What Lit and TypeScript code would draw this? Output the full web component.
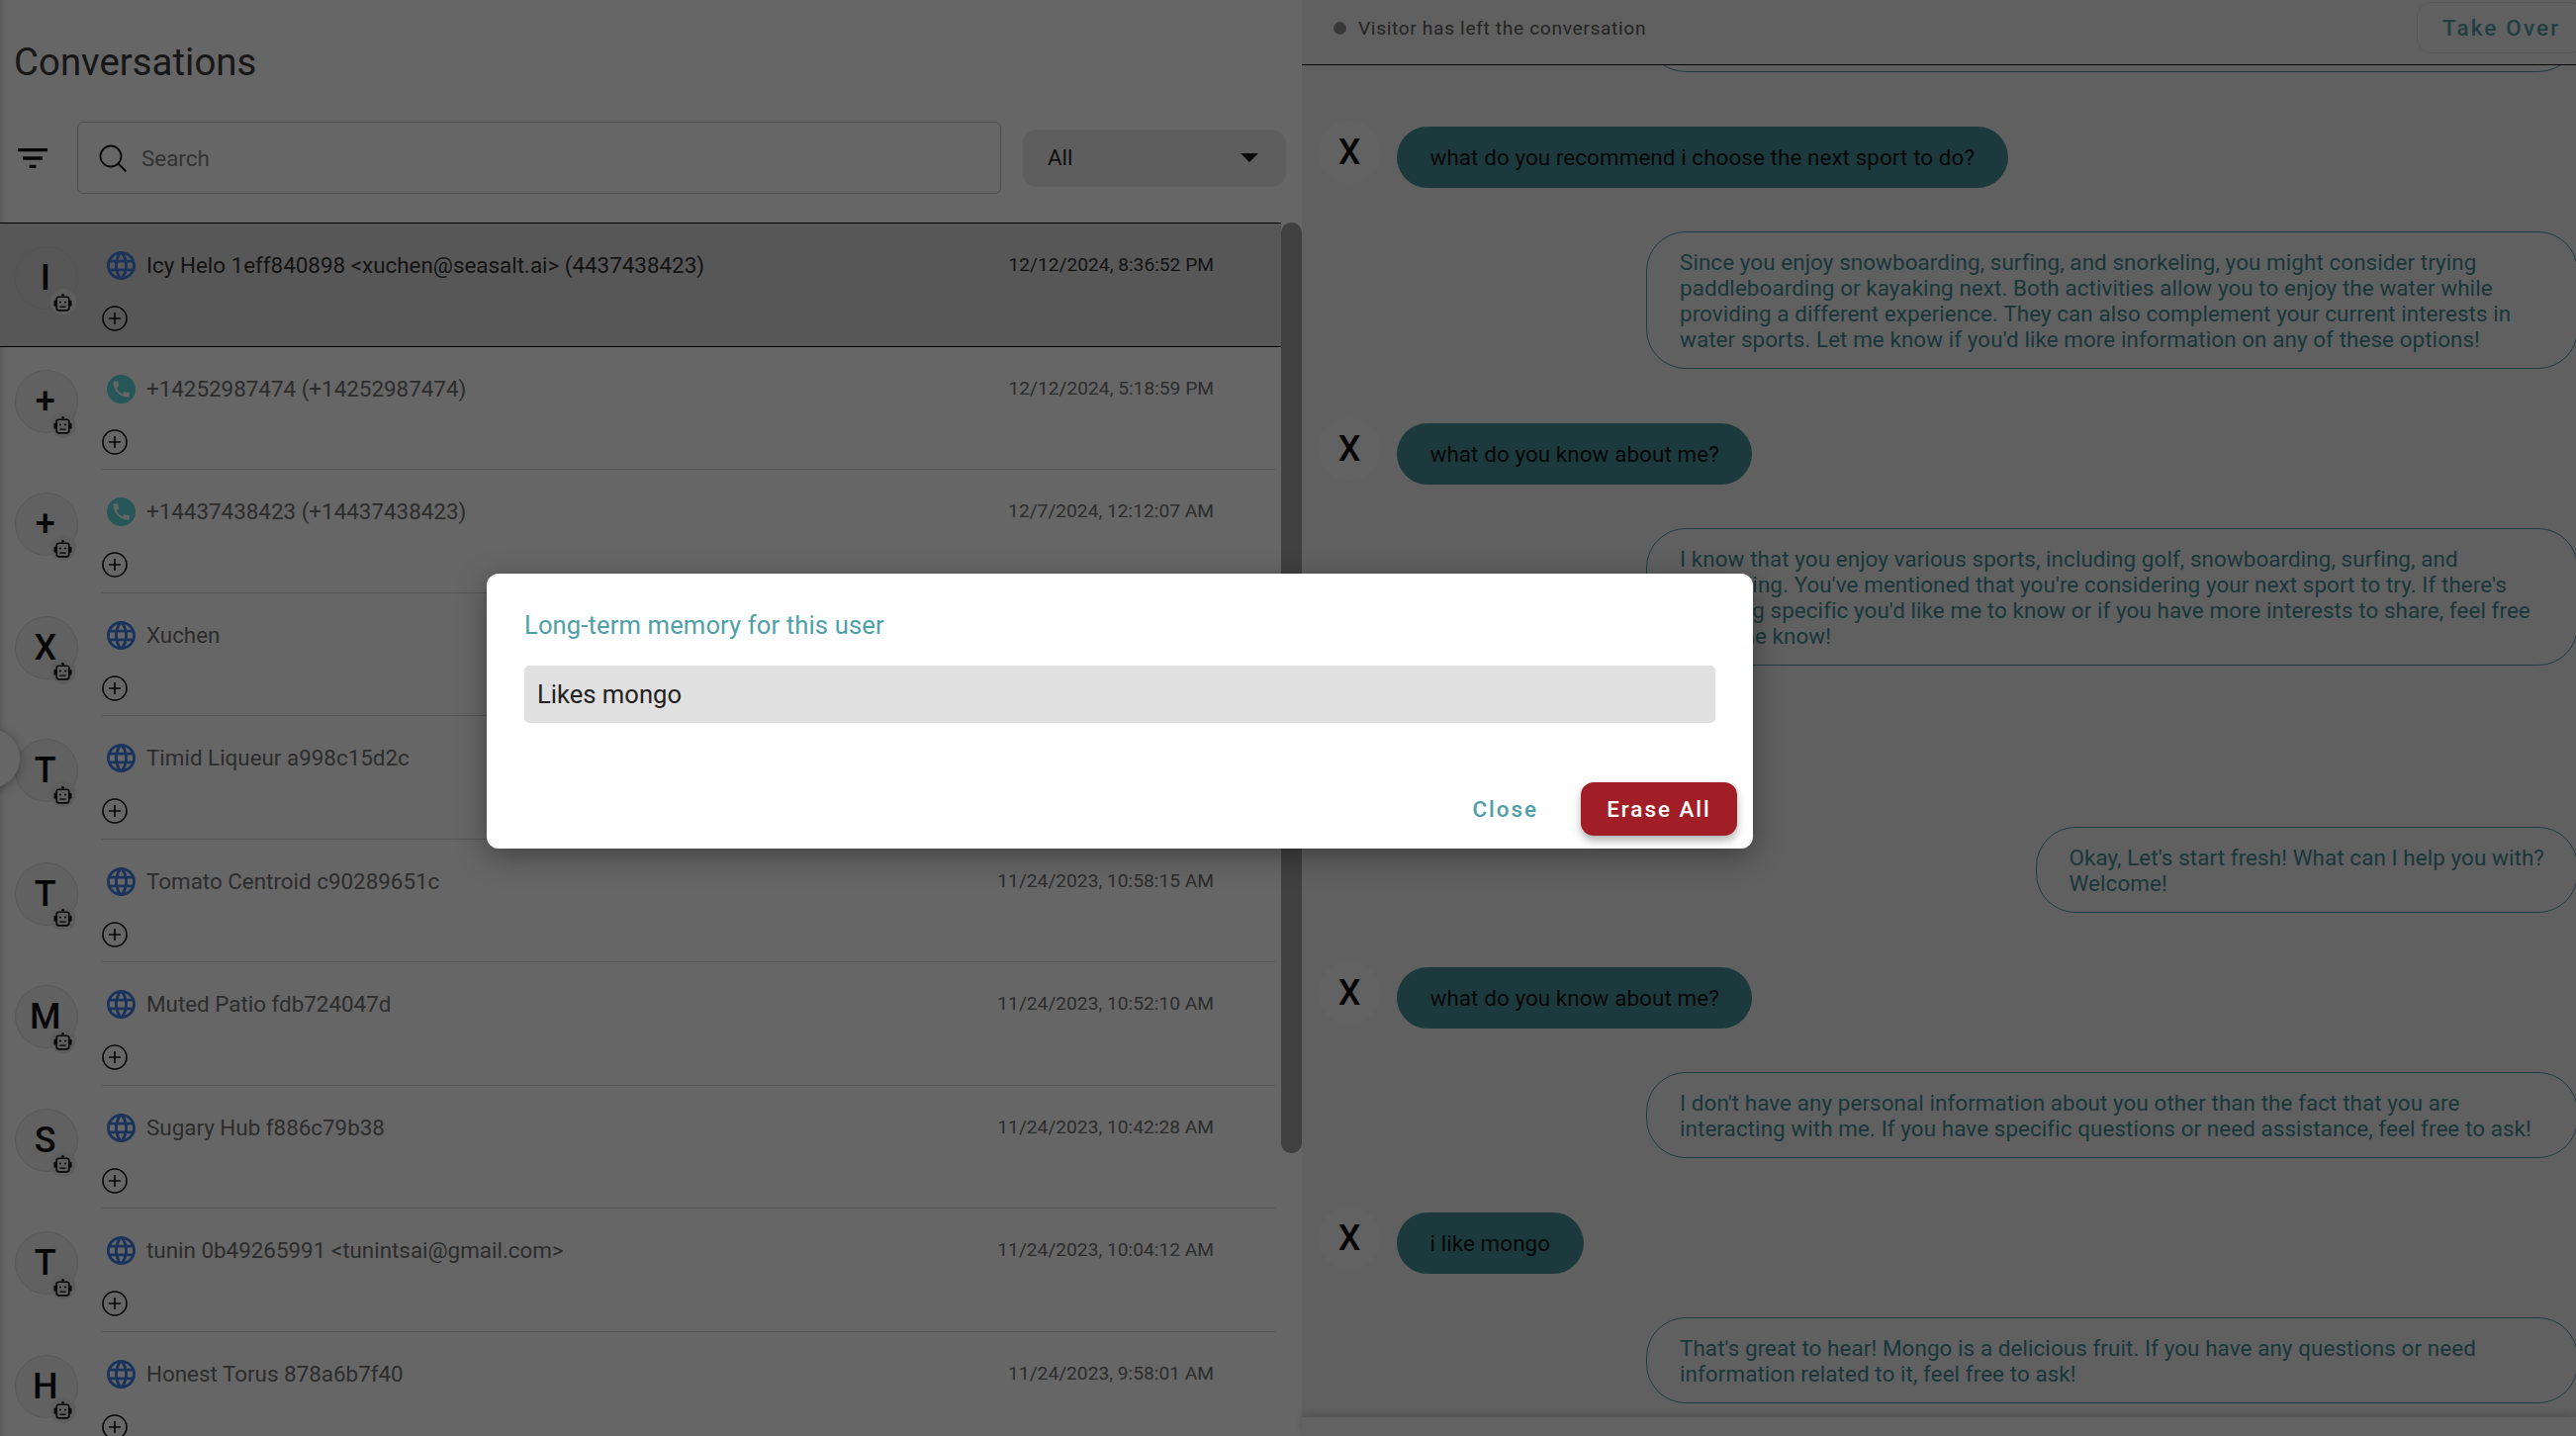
import { LitElement, html, css, svg } from 'lit';
import { customElement } from 'lit/decorators.js';
import { classMap } from 'lit/directives/class-map.js';

type Channel = 'web' | 'phone';

interface Conversation {
  letter: string;
  name: string;
  channel: Channel;
  date: string;
  selected?: boolean;
}

type Message =
  | { from: 'user' | 'bot'; text: string }
  | { from: 'hidden' };

const conversations: Conversation[] = [
  { letter: 'I', name: 'Icy Helo 1eff840898 <xuchen@seasalt.ai> (4437438423)', channel: 'web', date: '12/12/2024, 8:36:52 PM', selected: true },
  { letter: '+', name: '+14252987474 (+14252987474)', channel: 'phone', date: '12/12/2024, 5:18:59 PM' },
  { letter: '+', name: '+14437438423 (+14437438423)', channel: 'phone', date: '12/7/2024, 12:12:07 AM' },
  { letter: 'X', name: 'Xuchen', channel: 'web', date: '' },
  { letter: 'T', name: 'Timid Liqueur a998c15d2c', channel: 'web', date: '' },
  { letter: 'T', name: 'Tomato Centroid c90289651c', channel: 'web', date: '11/24/2023, 10:58:15 AM' },
  { letter: 'M', name: 'Muted Patio fdb724047d', channel: 'web', date: '11/24/2023, 10:52:10 AM' },
  { letter: 'S', name: 'Sugary Hub f886c79b38', channel: 'web', date: '11/24/2023, 10:42:28 AM' },
  { letter: 'T', name: 'tunin 0b49265991 <tunintsai@gmail.com>', channel: 'web', date: '11/24/2023, 10:04:12 AM' },
  { letter: 'H', name: 'Honest Torus 878a6b7f40', channel: 'web', date: '11/24/2023, 9:58:01 AM' },
];

const messages: Message[] = [
  { from: 'user', text: 'what do you recommend i choose the next sport to do?' },
  { from: 'bot', text: "Since you enjoy snowboarding, surfing, and snorkeling, you might consider trying paddleboarding or kayaking next. Both activities allow you to enjoy the water while providing a different experience. They can also complement your current interests in water sports. Let me know if you'd like more information on any of these options!" },
  { from: 'user', text: 'what do you know about me?' },
  { from: 'bot', text: "I know that you enjoy various sports, including golf, snowboarding, surfing, and snorkeling. You've mentioned that you're considering your next sport to try. If there's anything specific you'd like me to know or if you have more interests to share, feel free to let me know!" },
  { from: 'hidden' },
  { from: 'bot', text: "Okay, Let's start fresh! What can I help you with?\nWelcome!" },
  { from: 'user', text: 'what do you know about me?' },
  { from: 'bot', text: "I don't have any personal information about you other than the fact that you are interacting with me. If you have specific questions or need assistance, feel free to ask!" },
  { from: 'user', text: 'i like mongo' },
  { from: 'bot', text: "That's great to hear! Mongo is a delicious fruit. If you have any questions or need information related to it, feel free to ask!" },
];

const globeIcon = svg`<path fill="#3f80e8" d="M11.99 2C6.47 2 2 6.48 2 12s4.47 10 9.99 10C17.52 22 22 17.52 22 12S17.52 2 11.99 2zm6.93 6h-2.95c-.32-1.25-.78-2.45-1.38-3.56 1.84.63 3.37 1.91 4.33 3.56zM12 4.04c.83 1.2 1.48 2.53 1.91 3.96h-3.82c.43-1.43 1.08-2.76 1.91-3.96zM4.26 14C4.1 13.36 4 12.69 4 12s.1-1.36.26-2h3.38c-.08.66-.14 1.32-.14 2 0 .68.06 1.34.14 2H4.26zm.82 2h2.95c.32 1.25.78 2.45 1.38 3.56-1.84-.63-3.37-1.9-4.33-3.56zm2.95-8H5.08c.96-1.66 2.49-2.93 4.33-3.56C8.81 5.55 8.35 6.75 8.03 8zM12 19.96c-.83-1.2-1.48-2.53-1.91-3.96h3.82c-.43 1.43-1.08 2.76-1.91 3.96zM14.34 14H9.66c-.09-.66-.16-1.32-.16-2 0-.68.07-1.35.16-2h4.68c.09.65.16 1.32.16 2 0 .68-.07 1.34-.16 2zm.25 5.56c.6-1.11 1.06-2.31 1.38-3.56h2.95c-.96 1.65-2.49 2.93-4.33 3.56zM16.36 14c.08-.66.14-1.32.14-2 0-.68-.06-1.34-.14-2h3.38c.16.64.26 1.31.26 2s-.1 1.36-.26 2h-3.38z"/>`;

const phoneIcon = svg`<circle cx="12" cy="12" r="10" fill="#62d8dc"/><path transform="translate(4.6 4.6) scale(.62)" fill="#fff" d="M6.62 10.79c1.44 2.83 3.76 5.14 6.59 6.59l2.2-2.2c.27-.27.67-.36 1.02-.24 1.12.37 2.33.57 3.57.57.55 0 1 .45 1 1V20c0 .55-.45 1-1 1-9.39 0-17-7.61-17-17 0-.55.45-1 1-1h3.5c.55 0 1 .45 1 1 0 1.25.2 2.45.57 3.57.11.35.03.74-.25 1.02l-2.2 2.2z"/>`;

@customElement('app-root')
export class AppRoot extends LitElement {
  static styles = css`
    :host {
      display: block;
      position: relative;
      height: 100vh;
      overflow: hidden;
      font-family: Roboto, sans-serif;
      background: #fff;
    }
    .page {
      display: grid;
      grid-template-columns: 1316px 1fr;
      height: 100%;
      isolation: isolate;
    }
    .left {
      display: flex;
      flex-direction: column;
      min-width: 0;
      overflow: hidden;
      box-shadow: inset 8px 0 8px -8px rgba(0, 0, 0, 0.2);
    }
    h1 {
      margin: 0;
      padding: 42px 0 0 14px;
      height: 81px;
      box-sizing: border-box;
      font-size: 38.4px;
      line-height: 42px;
      font-weight: 400;
      color: #3a3a3a;
    }
    .tools {
      display: flex;
      align-items: center;
      height: 144px;
      box-sizing: border-box;
      padding: 13px 16px 0 18px;
    }
    .filter {
      width: 30px;
      height: 20px;
      margin-right: 30px;
      flex: none;
    }
    .search {
      flex: 1;
      height: 73px;
      display: flex;
      align-items: center;
      gap: 14px;
      box-sizing: border-box;
      padding-left: 21px;
      border: 1.5px solid #bdbdbd;
      border-radius: 6px;
      font-size: 22.4px;
      color: #808080;
    }
    .search svg {
      width: 29px;
      height: 28px;
    }
    .select {
      width: 266px;
      height: 58px;
      margin-left: 22px;
      display: flex;
      align-items: center;
      justify-content: space-between;
      box-sizing: border-box;
      padding: 0 28px 1px 25px;
      background: #ececec;
      border-radius: 14px;
      font-size: 22.4px;
      color: #2a2a2a;
    }
    .caret {
      width: 0;
      height: 0;
      border-left: 9px solid transparent;
      border-right: 9px solid transparent;
      border-top: 9px solid #111;
    }
    .list {
      flex: 1;
      display: flex;
      min-height: 0;
      overflow: hidden;
    }
    .rows {
      flex: 1;
      min-width: 0;
      border-top: 1px solid #000;
    }
    .row {
      display: flex;
      height: 124.5px;
      box-sizing: border-box;
      padding-left: 14.5px;
    }
    .row.selected {
      background: #dadada;
      border-bottom: 1px solid #000;
    }
    .avatar {
      position: relative;
      flex: none;
      width: 64px;
      height: 64px;
      margin-top: 23px;
      padding-right: 1.5px;
      border-radius: 50%;
      box-sizing: border-box;
      border: 1px solid #dcdcdc;
      background: #f2f2f2;
      display: flex;
      align-items: center;
      justify-content: center;
      font-size: 36px;
      font-weight: 500;
      color: #111;
    }
    .selected .avatar {
      background: #dadada;
      border-color: #cfcfcf;
    }
    .badge {
      position: absolute;
      right: 1px;
      bottom: -6px;
      width: 26px;
      height: 26px;
      border-radius: 50%;
      background: #ececec;
      display: flex;
      align-items: center;
      justify-content: center;
    }
    .badge svg {
      width: 21px;
      height: 21px;
    }
    .body {
      flex: 1;
      min-width: 0;
      margin: 0 6px 0 24.5px;
      padding: 28px 62px 0 0;
      border-bottom: 1px solid #d0d0d0;
    }
    .selected .body {
      border-bottom: none;
    }
    .line {
      display: flex;
      align-items: center;
      height: 29px;
      padding-left: 5px;
    }
    .line svg {
      flex: none;
      width: 29px;
      height: 29px;
    }
    .name {
      flex: 1;
      margin: -1px 0 0 11px;
      font-size: 22.4px;
      color: #707070;
      white-space: nowrap;
    }
    .selected .name,
    .selected .date {
      color: #333;
    }
    .date {
      margin-top: -2px;
      font-size: 19.2px;
      color: #707070;
      white-space: nowrap;
    }
    .add {
      display: block;
      width: 26px;
      height: 26px;
      margin-top: 26px;
    }
    .track {
      flex: none;
      width: 21px;
    }
    .thumb {
      height: 941px;
      border-radius: 10px;
      background: #a0a0a0;
    }
    .handle {
      position: absolute;
      left: -40px;
      top: 737px;
      width: 60px;
      height: 60px;
      border-radius: 50%;
      background: #fff;
      box-shadow: 0 2px 12px rgba(0, 0, 0, 0.35);
    }
    .chat {
      display: flex;
      flex-direction: column;
      min-width: 0;
      background: #f0f0f0;
    }
    .status {
      position: relative;
      z-index: 1;
      flex: none;
      height: 66px;
      box-sizing: border-box;
      display: flex;
      align-items: flex-start;
      overflow: hidden;
      padding: 2px 0 0 32px;
      background: #f0f0f0;
      border-bottom: 1px solid #111;
      font-size: 19.2px;
      letter-spacing: 0.64px;
      color: #5a5a5a;
    }
    .status-text {
      display: flex;
      align-items: center;
      gap: 12px;
      height: 52px;
      flex: 1;
    }
    .dot {
      width: 13px;
      height: 13px;
      border-radius: 50%;
      background: #909090;
    }
    .take {
      flex: none;
      width: 170px;
      height: 52px;
      margin-right: -9px;
      box-sizing: border-box;
      padding-left: 25px;
      display: flex;
      align-items: center;
      border: 1px solid #dcdcdc;
      border-radius: 14px;
      font-size: 22.4px;
      font-weight: 500;
      letter-spacing: 2.2px;
      color: #4f9fa9;
    }
    .feed {
      flex: 1;
      min-height: 0;
      overflow: hidden;
    }
    .msg {
      display: flex;
    }
    .msg.user {
      align-items: flex-start;
      gap: 16px;
      padding-left: 16px;
      margin-top: 55px;
    }
    .msg.bot {
      justify-content: flex-end;
      margin-top: 44px;
      margin-right: -2px;
    }
    .msg.spacer {
      height: 64px;
      margin-top: 55px;
    }
    .partial {
      height: 40px;
      margin: -33px -2px 0 auto;
      width: 942px;
      box-sizing: border-box;
      border: 1px solid #4a96a0;
      border-radius: 0 0 40px 40px;
    }
    .face {
      flex: none;
      width: 64px;
      height: 64px;
      margin-top: -6px;
      border-radius: 50%;
      background: #f4f4f4;
      display: flex;
      align-items: center;
      justify-content: center;
      font-size: 36px;
      font-weight: 500;
      color: #111;
    }
    .bubble {
      box-sizing: border-box;
      font-size: 22.4px;
      line-height: 26px;
      letter-spacing: 0.09px;
      white-space: pre-line;
    }
    .user .bubble {
      height: 62px;
      padding: 18px 33.5px;
      border-radius: 31px;
      background: #47919a;
      color: #111;
    }
    .bot .bubble {
      max-width: 942px;
      padding: 16.5px 33px;
      border: 1px solid #4a96a0;
      border-radius: 40px;
      color: #3f8a93;
    }
    .foot {
      flex: none;
      height: 19px;
      background: #f6f6f6;
      box-shadow: 0 -3px 8px rgba(0, 0, 0, 0.18);
    }
    .scrim {
      position: absolute;
      inset: 0;
      background: rgba(0, 0, 0, 0.6);
    }
    .dialog {
      position: absolute;
      left: 492px;
      top: 580px;
      width: 1280px;
      height: 278px;
      box-sizing: border-box;
      padding: 37px 16px 0 38px;
      display: flex;
      flex-direction: column;
      background: #fff;
      border-radius: 12px;
      box-shadow: 0 8px 30px rgba(0, 0, 0, 0.35);
    }
    .dialog h2 {
      margin: 0;
      font-size: 25.6px;
      line-height: 30px;
      font-weight: 400;
      letter-spacing: 0.12px;
      color: #4fa0a8;
    }
    .memory {
      width: 1204px;
      height: 58px;
      margin-top: 26px;
      box-sizing: border-box;
      padding-left: 13px;
      display: flex;
      align-items: center;
      background: #e0e0e0;
      border-radius: 5px;
      font-size: 25.6px;
      color: #222;
    }
    .actions {
      display: flex;
      justify-content: flex-end;
      align-items: center;
      gap: 43px;
      margin-top: 60px;
    }
    .close {
      font-size: 22.4px;
      font-weight: 500;
      letter-spacing: 2px;
      color: #4fa0a8;
    }
    .erase {
      width: 158px;
      height: 54px;
      display: flex;
      align-items: center;
      justify-content: center;
      background: #a11e26;
      border-radius: 13px;
      font-size: 22.4px;
      font-weight: 500;
      letter-spacing: 2px;
      color: #fff;
      box-shadow: 0 5px 9px rgba(0, 0, 0, 0.3);
    }
  `;

  private _robot() {
    return html`<svg viewBox="0 0 20 20" fill="none" stroke="#111" stroke-width="1.6">
      <rect x="4" y="5" width="12" height="13" rx="2.2"/>
      <circle cx="10" cy="3.2" r="1.3" fill="#111" stroke="none"/>
      <rect x="1.4" y="8.4" width="2.2" height="5.6" rx="1" fill="#111" stroke="none"/>
      <rect x="16.4" y="8.4" width="2.2" height="5.6" rx="1" fill="#111" stroke="none"/>
      <path d="M7 14.4h6" stroke-width="1.3"/>
      <circle cx="7.5" cy="10" r="1" fill="#111" stroke="none"/>
      <circle cx="12.5" cy="10" r="1" fill="#111" stroke="none"/>
    </svg>`;
  }

  private _row(c: Conversation) {
    return html`
      <div class=${classMap({ row: true, selected: !!c.selected })}>
        <div class="avatar">${c.letter}<span class="badge">${this._robot()}</span></div>
        <div class="body">
          <div class="line">
            <svg viewBox="2 2 20 20">${c.channel === 'web' ? globeIcon : phoneIcon}</svg>
            <span class="name">${c.name}</span>
            <span class="date">${c.date}</span>
          </div>
          <svg class="add" viewBox="0 0 26 26" fill="none" stroke="#111" stroke-width="1.6">
            <circle cx="13" cy="13" r="12"/>
            <path d="M13 7v12M7 13h12"/>
          </svg>
        </div>
      </div>
    `;
  }

  private _message(m: Message) {
    if (m.from === 'hidden') return html`<div class="msg spacer"></div>`;
    if (m.from === 'user') {
      return html`<div class="msg user"><div class="face">X</div><div class="bubble">${m.text}</div></div>`;
    }
    return html`<div class="msg bot"><div class="bubble">${m.text}</div></div>`;
  }

  render() {
    return html`
      <div class="page">
        <section class="left">
          <h1>Conversations</h1>
          <div class="tools">
            <svg class="filter" viewBox="3 6 18 12" preserveAspectRatio="none" fill="#111">
              <path d="M10 18h4v-2h-4v2zM3 6v2h18V6H3zm3 7h12v-2H6v2z"/>
            </svg>
            <div class="search">
              <svg viewBox="0 0 29 28" fill="none" stroke="#111" stroke-width="1.8">
                <circle cx="12" cy="12" r="10.5"/>
                <path d="M19.5 19.5l8 8"/>
              </svg>
              Search
            </div>
            <div class="select">All<span class="caret"></span></div>
          </div>
          <div class="list">
            <div class="rows">${conversations.map((c) => this._row(c))}</div>
            <div class="track"><div class="thumb"></div></div>
          </div>
        </section>
        <section class="chat">
          <div class="status">
            <div class="status-text"><span class="dot"></span>Visitor has left the conversation</div>
            <div class="take">Take Over</div>
          </div>
          <div class="feed">
            <div class="partial"></div>
            ${messages.map((m) => this._message(m))}
          </div>
          <div class="foot"></div>
        </section>
      </div>
      <div class="handle"></div>
      <div class="scrim"></div>
      <div class="dialog">
        <h2>Long-term memory for this user</h2>
        <div class="memory">Likes mongo</div>
        <div class="actions">
          <span class="close">Close</span>
          <span class="erase">Erase All</span>
        </div>
      </div>
    `;
  }
}
